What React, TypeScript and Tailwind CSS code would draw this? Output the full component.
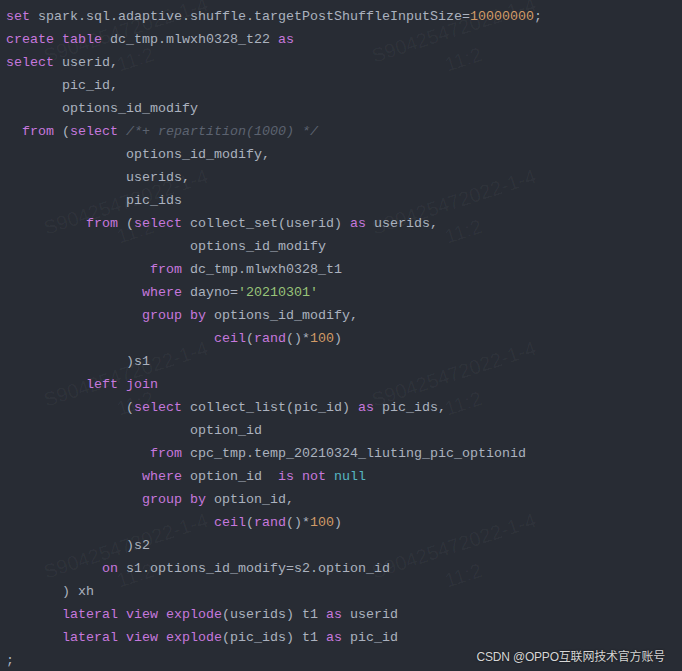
import React from "react";

type Tok = [string, string];

// k keyword, t plain, n number, s string, c comment, u literal
const lines: Tok[][] = [
  [["k", "set"], ["t", " spark.sql.adaptive.shuffle.targetPostShuffleInputSize="], ["n", "10000000"], ["t", ";"]],
  [["k", "create"], ["t", " "], ["k", "table"], ["t", " dc_tmp.mlwxh0328_t22 "], ["k", "as"]],
  [["k", "select"], ["t", " userid,"]],
  [["t", "       pic_id,"]],
  [["t", "       options_id_modify"]],
  [["t", "  "], ["k", "from"], ["t", " ("], ["k", "select"], ["t", " "], ["c", "/*+ repartition(1000) */"]],
  [["t", "               options_id_modify,"]],
  [["t", "               userids,"]],
  [["t", "               pic_ids"]],
  [["t", "          "], ["k", "from"], ["t", " ("], ["k", "select"], ["t", " collect_set(userid) "], ["k", "as"], ["t", " userids,"]],
  [["t", "                       options_id_modify"]],
  [["t", "                  "], ["k", "from"], ["t", " dc_tmp.mlwxh0328_t1"]],
  [["t", "                 "], ["k", "where"], ["t", " dayno="], ["s", "'20210301'"]],
  [["t", "                 "], ["k", "group"], ["t", " "], ["k", "by"], ["t", " options_id_modify,"]],
  [["t", "                          "], ["k", "ceil"], ["t", "("], ["k", "rand"], ["t", "()*"], ["n", "100"], ["t", ")"]],
  [["t", "               )s1"]],
  [["t", "          "], ["k", "left"], ["t", " "], ["k", "join"]],
  [["t", "               ("], ["k", "select"], ["t", " collect_list(pic_id) "], ["k", "as"], ["t", " pic_ids,"]],
  [["t", "                       option_id"]],
  [["t", "                  "], ["k", "from"], ["t", " cpc_tmp.temp_20210324_liuting_pic_optionid"]],
  [["t", "                 "], ["k", "where"], ["t", " option_id  "], ["k", "is"], ["t", " "], ["k", "not"], ["t", " "], ["u", "null"]],
  [["t", "                 "], ["k", "group"], ["t", " "], ["k", "by"], ["t", " option_id,"]],
  [["t", "                          "], ["k", "ceil"], ["t", "("], ["k", "rand"], ["t", "()*"], ["n", "100"], ["t", ")"]],
  [["t", "               )s2"]],
  [["t", "            "], ["k", "on"], ["t", " s1.options_id_modify=s2.option_id"]],
  [["t", "       ) xh"]],
  [["t", "       "], ["k", "lateral"], ["t", " "], ["k", "view"], ["t", " "], ["k", "explode"], ["t", "(userids) t1 "], ["k", "as"], ["t", " userid"]],
  [["t", "       "], ["k", "lateral"], ["t", " "], ["k", "view"], ["t", " "], ["k", "explode"], ["t", "(pic_ids) t1 "], ["k", "as"], ["t", " pic_id"]],
  [["t", ";"]],
];

const colors: Record<string, string> = {
  k: "text-[#c678dd]",
  t: "text-[#abb2bf]",
  n: "text-[#d19a66]",
  s: "text-[#98c379]",
  c: "text-[#5c6370] italic",
  u: "text-[#56b6c2]",
};

function Watermark() {
  return (
    <div
      className="flex rotate-[-18deg] flex-col items-center text-[20px] leading-[31px] whitespace-nowrap text-white/[0.04]"
      style={{ fontFamily: '"Liberation Sans", Arial, sans-serif' }}
    >
      <span>S90425472022-1-4</span>
      <span>11:2</span>
    </div>
  );
}

export default function App() {
  return (
    <div className="relative h-[671px] w-[682px] overflow-hidden bg-[#282c34]">
      <div
        className="whitespace-pre pl-[6px] pt-[5px] text-[13.334px] leading-[23px]"
        style={{ fontFamily: '"Liberation Mono", "DejaVu Sans Mono", monospace' }}
      >
        {lines.map((line, i) => (
          <div key={i} className="h-[23px]">
            {line.map(([kind, text], j) => (
              <span key={j} className={colors[kind]}>
                {text}
              </span>
            ))}
          </div>
        ))}
      </div>

      {/* watermark layer over the code */}
      <div className="pointer-events-none absolute left-0 top-[-41px] grid w-full grid-cols-[262px_394px] auto-rows-[172px] place-items-center">
        {Array.from({ length: 8 }).map((_, i) => (
          <Watermark key={i} />
        ))}
      </div>

      <div
        className="absolute bottom-[8px] right-[17px] text-[12px] leading-none tracking-[-0.2px] text-[#d6d6d6] [text-shadow:0_0_2px_rgba(0,0,0,0.7)]"
        style={{ fontFamily: '"Liberation Sans", "Noto Sans CJK SC", sans-serif' }}
      >
        CSDN @OPPO互联网技术官方账号
      </div>
    </div>
  );
}
